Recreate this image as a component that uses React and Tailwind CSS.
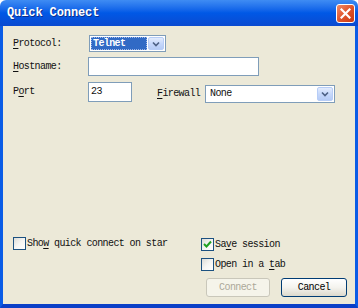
import React from "react";

function Check({ checked }) {
  return (
    <span className="w-[13px] h-[13px] shrink-0 border border-[#1c5180] bg-linear-to-br from-[#dcdcd7] via-[#f5f5f2] to-white flex items-center justify-center">
      {checked && (
        <svg width="9" height="9" viewBox="0 0 9 9">
          <polyline
            points="1,4 3.5,6.5 8,1.5"
            fill="none"
            stroke="#21a121"
            strokeWidth="2"
          />
        </svg>
      )}
    </span>
  );
}

function Mn({ children }) {
  return <span className="underline underline-offset-2">{children}</span>;
}

function Arrow() {
  return (
    <span className="w-[16px] h-full shrink-0 rounded-[2px] border border-[#b7cdf7] bg-linear-to-b from-[#e3ecfd] via-[#c6d8fb] to-[#b5cbf6] flex items-center justify-center">
      <svg width="8" height="6" viewBox="0 0 8 6">
        <polyline
          points="1,1.5 4,4.5 7,1.5"
          fill="none"
          stroke="#4d6185"
          strokeWidth="1.6"
        />
      </svg>
    </span>
  );
}

function XpButton({ children, disabled }) {
  return (
    <button
      className={
        disabled
          ? "w-[64px] h-[19px] rounded-[3px] border border-[#c9c7ba] bg-[#f5f4ea] text-[#aca899] flex items-center justify-center"
          : "w-[66px] h-[19px] rounded-[3px] border border-[#003c74] bg-linear-to-b from-white via-[#f4f3ee] to-[#dcd9cc] text-black flex items-center justify-center"
      }
    >
      {children}
    </button>
  );
}

export default function App() {
  return (
    <div className="w-[358px] h-[308px] flex flex-col font-['Liberation_Mono','Courier_New',monospace] text-[10px] tracking-[-0.6px] text-[#111]">
      <div className="h-[26px] shrink-0 rounded-t-[6px] bg-linear-to-b from-[#3f8cf3] via-[#0058e6] to-[#0a4ad0] flex items-center justify-between pl-[7px] pr-[3px]">
        <span className="text-white text-[12px] font-bold tracking-[-0.1px] [text-shadow:1px_1px_#0c2f8c]">
          Quick Connect
        </span>
        <span className="w-[19px] h-[19px] rounded-[3px] border border-white bg-linear-to-br from-[#f08a67] via-[#e0542b] to-[#c93a12] flex items-center justify-center">
          <svg width="11" height="11" viewBox="0 0 11 11">
            <path
              d="M1.5 1.5 L9.5 9.5 M9.5 1.5 L1.5 9.5"
              stroke="#ffffff"
              strokeWidth="2.2"
              strokeLinecap="square"
            />
          </svg>
        </span>
      </div>

      <div className="flex-1 flex flex-col border-x-[3px] border-b-[4px] border-x-[#0a5ce6] border-b-[#0a3fc7] bg-[#ece9d8] pl-[10px] pr-[8px] pt-[9px]">
        <div className="flex items-center h-[17px]">
          <span className="w-[76px] shrink-0">
            <Mn>P</Mn>rotocol:
          </span>
          <div className="w-[77px] h-[17px] border border-[#7f9db9] bg-white flex items-center p-[1px] gap-[1px]">
            <span className="flex-1 h-full bg-[#316ac5] text-white font-bold outline outline-1 outline-dotted outline-[#a0b8e8] -outline-offset-1 pl-[2px] flex items-center">
              Telnet
            </span>
            <Arrow />
          </div>
        </div>

        <div className="flex items-center h-[19px] mt-[5px]">
          <span className="w-[75px] shrink-0">
            <Mn>H</Mn>ostname:
          </span>
          <div className="w-[171px] h-[19px] border border-[#7f9db9] bg-white" />
        </div>

        <div className="flex items-center h-[21px] mt-[5px]">
          <span className="w-[75px] shrink-0">
            P<Mn>o</Mn>rt
          </span>
          <div className="w-[44px] h-[20px] border border-[#7f9db9] bg-white pl-[2px] flex items-center">
            23
          </div>
          <span className="ml-[25px] w-[48px] shrink-0 mt-[3px]">
            <Mn>F</Mn>irewall
          </span>
          <div className="w-[130px] h-[18px] mt-[4px] border border-[#7f9db9] bg-white flex items-center p-[1px]">
            <span className="flex-1 pl-[3px]">None</span>
            <Arrow />
          </div>
        </div>

        <div className="flex-1" />

        <div className="flex">
          <div className="w-[188px] shrink-0 flex items-center gap-[1px] h-[13px]">
            <Check />
            <span>
              Sho<Mn>w</Mn> quick connect on star
            </span>
          </div>
          <div className="flex flex-col gap-[7px] mt-[1px]">
            <div className="flex items-center gap-[1px] h-[13px]">
              <Check checked />
              <span>
                Sa<Mn>v</Mn>e session
              </span>
            </div>
            <div className="flex items-center gap-[1px] h-[13px]">
              <Check />
              <span>
                Open in a <Mn>t</Mn>ab
              </span>
            </div>
          </div>
        </div>

        <div className="flex justify-end gap-[11px] mt-[7px] mb-[7px]">
          <XpButton disabled>Connect</XpButton>
          <XpButton>Cancel</XpButton>
        </div>
      </div>
    </div>
  );
}
